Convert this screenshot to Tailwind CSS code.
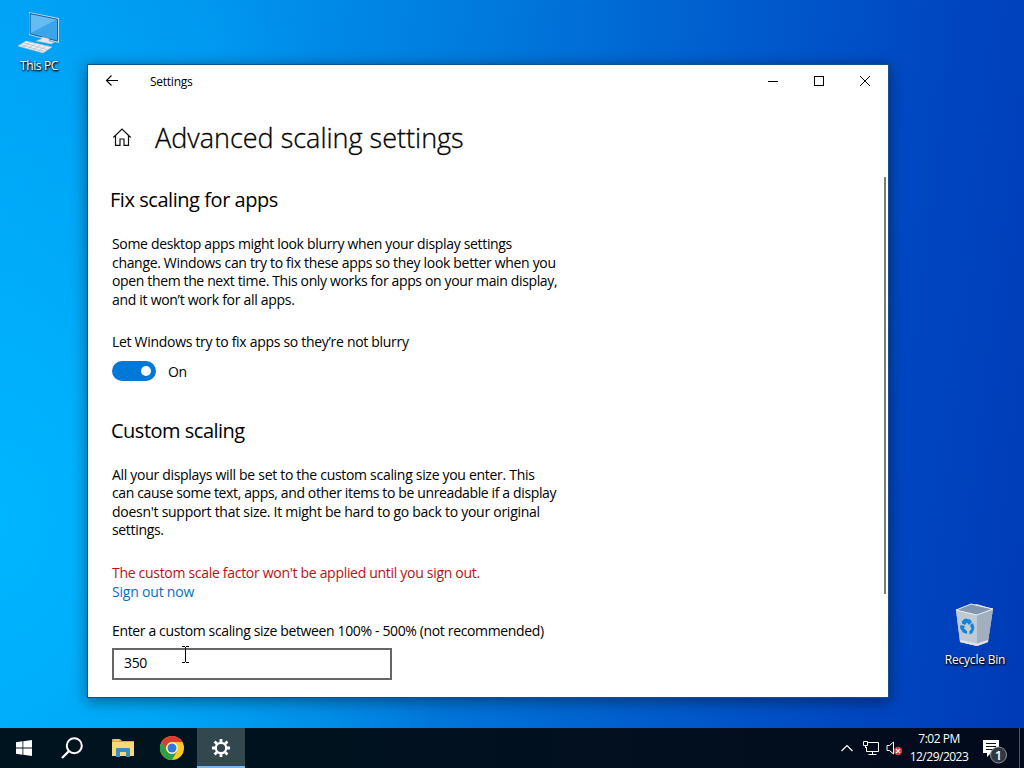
<!DOCTYPE html>
<html lang="en">

<head>
    <meta charset="UTF-8">
    <meta name="viewport" content="width=device-width, initial-scale=1.0">
    <title>Settings</title>
    <script src="https://cdn.jsdelivr.net/npm/@tailwindcss/browser@4"></script>
</head>

<body class="w-[1024px] h-[768px] overflow-hidden font-['Open_Sans','Noto_Sans',sans-serif]">

    <div class="relative flex flex-col w-[1024px] h-[768px] overflow-hidden bg-[radial-gradient(ellipse_460px_640px_at_0px_520px,#00b6ff_0%,#00b4ff00_100%),linear-gradient(97deg,#009ff4_0%,#0094ee_20%,#007cde_42%,#005fce_64%,#0047c2_84%,#003ab6_100%)]">

        <!-- Desktop -->
        <main class="relative flex-1">
            <div class="absolute left-0 top-[10px] w-[78px] flex flex-col items-center">
                <svg width="46" height="46" viewBox="0 0 46 46">
                    <path d="M13 2L43 8V33L13 25Z" fill="#b9d8ea" />
                    <path d="M14 3.500L41.500 9.300V31L14 23.800Z" fill="#3ba5ec" stroke="#1c5f94" stroke-width="1" />
                    <path d="M15 4.500L40.500 9.600L15 23Z" fill="#79c4f6" opacity=".7" />
                    <path d="M26 27L33 28.500V31L39 32L35 34L20 31L25 29Z" fill="#dfe8ee" stroke="#9ab0be" stroke-width=".5" />
                    <path d="M10 31L36 37L27 43L2 36Z" fill="#eceff1" stroke="#b7c3ca" stroke-width=".6" />
                    <path d="M8 33L31 39.500M5.500 35L28 41.500M15 32L7 37M20 33L12 38.500M25 34.500L17 40M30 36L22 41.500" stroke="#a8b4bb" stroke-width=".6" />
                </svg>
                <span class="mt-[1px] text-[12px] leading-[18px] tracking-[-0.35px] text-white [text-shadow:1px_1px_2px_#000,0_1px_2px_#000]">This PC</span>
            </div>

            <div class="absolute left-[936px] top-[600px] w-[78px] flex flex-col items-center">
                <svg width="46" height="50" viewBox="0 0 46 50">
                    <path d="M4 10L25 4L41 9L36 42L25 46L8 42Z" fill="#c3ccd6" />
                    <path d="M4 10L25 15L25 46L8 42Z" fill="#c0cad5" />
                    <path d="M25 15L41 9L36 42L25 46Z" fill="#a2afbf" />
                    <path d="M4 10L19 4L41 9L25 15Z" fill="#8296b0" stroke="#e9eef3" stroke-width="1" />
                    <path d="M8 40L25 43.500L36 40V42L25 46L8 42Z" fill="#e2e4e6" />
                    <g fill="#1583d8">
                        <path d="M10 21L13 18.500L18 19.500L20 22L17 25L15 22.500L13 25L10 23.500Z" />
                        <path d="M8.500 25L13 26L12 28.500L15 31V34L11 32.500L8 28Z" />
                        <path d="M18 25L21 23L22.500 28L20.500 33L17.500 34.500V31L19.500 29Z" />
                    </g>
                </svg>
                <span class="mt-[1px] text-[12px] leading-[18px] tracking-[-0.2px] text-white whitespace-nowrap [text-shadow:1px_1px_2px_#000,0_1px_2px_#000]">Recycle Bin</span>
            </div>

            <!-- Settings window -->
            <section class="absolute left-[88px] top-[65px] w-[800px] h-[632px] flex flex-col bg-white text-black shadow-[0_0_0_1px_#124f8c,0_3px_14px_2px_rgba(0,0,0,0.4)]">
                <header class="flex h-8 items-center">
                    <button class="w-12 h-8 flex items-center justify-center">
                        <svg width="14" height="12" viewBox="0 0 14 12" fill="none" stroke="#000" stroke-width="1.1">
                            <path d="M13 5.500H1.500M6.500 .5L1.500 5.500L6.500 10.500" />
                        </svg>
                    </button>
                    <span class="ml-[14px] mt-[2px] text-[12px] tracking-[-0.25px]">Settings</span>
                    <div class="ml-auto flex">
                        <button class="w-[46px] h-8 flex items-center justify-center"><span class="w-[10px] h-px bg-black"></span></button>
                        <button class="w-[46px] h-8 flex items-center justify-center"><span class="w-[10px] h-[10px] border border-black"></span></button>
                        <button class="w-[46px] h-8 flex items-center justify-center">
                            <svg width="12" height="12" viewBox="0 0 12 12" stroke="#000" stroke-width="1">
                                <path d="M1 1L11 11M11 1L1 11" />
                            </svg>
                        </button>
                    </div>
                </header>

                <div class="flex items-center h-20 pl-6">
                    <svg width="20" height="20" viewBox="0 0 20 20" fill="none" stroke="#111" stroke-width="1.200">
                        <path d="M1.300 10.500L10 2L18.700 10.500M3.500 8.500V18.400H8V12H12V18.400H16.500V8.500" />
                    </svg>
                    <h1 class="ml-[23px] mt-[2px] text-[27px] font-light whitespace-nowrap [-webkit-text-stroke:0.3px_#000]">Advanced scaling settings</h1>
                </div>

                <div class="flex flex-1 justify-between">
                    <div class="pl-6 pt-[9px] text-[14px] leading-[18.5px] tracking-[-0.33px] whitespace-nowrap">
                        <h2 class="-ml-[2px] text-[20px] leading-7 tracking-[-0.45px]">Fix scaling for apps</h2>
                        <p class="mt-[21px]">
                            Some desktop apps might look blurry when your display settings<br>
                            <span class="tracking-[-0.32px]">change. Windows can try to fix these apps so they look better when you</span><br>
                            <span class="tracking-[-0.36px]">open them the next time. This only works for apps on your main display,</span><br>
                            <span class="tracking-[-0.3px]">and it won’t work for all apps.</span>
                        </p>
                        <p class="mt-6 tracking-[-0.3px]">Let Windows try to fix apps so they’re not blurry</p>
                        <div class="flex items-center h-5 mt-[9px]">
                            <span class="flex items-center justify-end w-11 h-5 pr-[5px] rounded-full bg-[#0078d7]"><span class="w-[10px] h-[10px] rounded-full bg-white"></span></span>
                            <span class="ml-3 mt-[3px]">On</span>
                        </div>

                        <h2 class="-ml-px mt-[36px] text-[20px] leading-7 tracking-[-0.5px]">Custom scaling</h2>
                        <p class="mt-[21px]">
                            <span class="tracking-[-0.3px]">All your displays will be set to the custom scaling size you enter. This</span><br>
                            <span class="tracking-[-0.37px]">can cause some text, apps, and other items to be unreadable if a display</span><br>
                            <span class="tracking-[-0.27px]">doesn't support that size. It might be hard to go back to your original</span><br>
                            settings.
                        </p>
                        <p class="mt-6 tracking-[-0.3px] text-[#bd0f14]">The custom scale factor won't be applied until you sign out.</p>
                        <a class="block mt-px tracking-[-0.2px] text-[#0072bc]">Sign out now</a>
                        <p class="mt-[20px] tracking-[-0.36px]">Enter a custom scaling size between 100% - 500% (not recommended)</p>
                        <div class="flex items-center w-[280px] h-8 mt-[8px] pl-[10px] pb-px border-2 border-[#666]">350</div>
                    </div>
                    <div class="w-[2px] h-[417px] mr-[2px] bg-[#7a7a7a]"></div>
                </div>
            </section>

            <!-- Text cursor -->
            <svg class="absolute left-[181px] top-[646px]" width="9" height="17" viewBox="0 0 9 17" fill="none" stroke="#000">
                <path d="M1 .5H4M5 .5H8M4.500 1V16M1 16.500H4M5 16.500H8" />
            </svg>
        </main>

        <!-- Taskbar -->
        <footer class="flex h-10 bg-[linear-gradient(90deg,#00141f,#02101f_60%,#020a1c)] text-white">
            <div class="w-12 flex items-center justify-center">
                <svg width="16" height="16" viewBox="0 0 16 16" fill="#fff">
                    <path d="M0 2.300L6.500 1.300V7.500H0ZM7.300 1.200L16 0V7.500H7.300ZM0 8.400H6.500V14.700L0 13.700ZM7.300 8.400H16V16L7.300 14.800Z" />
                </svg>
            </div>
            <div class="w-[49px] flex items-center justify-center">
                <svg class="mr-px" width="22" height="22" viewBox="0 0 22 22" fill="none" stroke="#fff" stroke-width="2">
                    <circle cx="13.300" cy="8.700" r="7.500" />
                    <path d="M8 14L1 21" stroke-width="2.300" />
                </svg>
            </div>
            <div class="w-[51px] flex items-center justify-center">
                <svg width="22" height="18" viewBox="0 0 22 18">
                    <path d="M0 0H8L10 2H22V17H0Z" fill="#e6a532" />
                    <path d="M0 3H22V17H0Z" fill="#fcd974" />
                    <path d="M4 18V10Q4 9 5 9H17Q18 9 18 10V18H14V13H8V18Z" fill="#3c8dbf" />
                    <path d="M2 1H7" stroke="#fbe7ad" />
                </svg>
            </div>
            <div class="w-[49px] pr-px flex items-center justify-center">
                <svg width="24" height="24" viewBox="0 0 24 24">
                    <circle cx="12" cy="12" r="12" fill="#fbc926" />
                    <path d="M1.600 6A12 12 0 0 1 22.400 6H12A6 6 0 0 0 6.800 15Z" fill="#dd3b2e" />
                    <path d="M1.600 6A12 12 0 0 0 12 24L17.200 15A6 6 0 0 1 6.800 15Z" fill="#2a9f4b" />
                    <circle cx="12" cy="12" r="5.700" fill="#fff" />
                    <circle cx="12" cy="12" r="4.500" fill="#2f76dd" />
                </svg>
            </div>
            <div class="w-12 flex items-center justify-center bg-[#33474f] border-b-2 border-[#76b9ed]">
                <svg class="mt-[2px]" width="18" height="18" viewBox="0 0 18 18" fill="none" stroke="#fff">
                    <circle cx="9" cy="9" r="5.200" stroke-width="2.200" />
                    <path d="M9 0V3M9 15V18M0 9H3M15 9H18M2.600 2.600L4.800 4.800M13.200 13.200L15.400 15.400M2.600 15.400L4.800 13.200M13.200 4.800L15.400 2.600" stroke-width="2.800" />
                </svg>
            </div>

            <div class="ml-auto flex items-center">
                <svg width="12" height="8" viewBox="0 0 12 8" fill="none" stroke="#fff" stroke-width="1.200">
                    <path d="M.5 7L6 1.500L11.500 7" />
                </svg>
                <svg class="ml-[9px]" width="18" height="16" viewBox="0 0 18 16" fill="none" stroke="#fff">
                    <path d="M6 2.500H16.500V11.500H4.500V7M10.500 11.500V14.500M6.500 14.500H14.500M1.500 1.500H5.500V5.500H1.500ZM3.500 5.500V8" />
                </svg>
                <svg class="ml-[6px]" width="17" height="16" viewBox="0 0 17 16" fill="none" stroke="#fff">
                    <path d="M1 5.500H3.500L7.500 2V14L3.500 10.500H1Z" />
                    <circle cx="12" cy="11" r="4.200" fill="#d9343c" stroke="none" />
                    <path d="M10 9L14 13M14 9L10 13" stroke-width="1.100" />
                </svg>
                <div class="w-[66px] ml-[3px] text-center text-[12px] leading-[18px] tracking-[-0.5px]">
                    <div>7:02 PM</div>
                    <div>12/29/2023</div>
                </div>
                <div class="ml-[10px] mt-[5px]">
                    <svg width="26" height="26" viewBox="0 0 26 26">
                        <path d="M1 2H17V15H9L5 19V15H1Z" fill="#fff" />
                        <path d="M4 5.500H14M4 8.500H14M4 11.500H11" stroke="#06101f" />
                        <circle cx="16.500" cy="17" r="8" fill="#303842" stroke="#8b9299" />
                        <text x="16.500" y="21.500" fill="#fff" font-size="13" font-weight="600" text-anchor="middle">1</text>
                    </svg>
                </div>
                <div class="w-px h-10 ml-[11px] mr-[4px] bg-[#4a5566]"></div>
            </div>
        </footer>
    </div>
</body>

</html>
